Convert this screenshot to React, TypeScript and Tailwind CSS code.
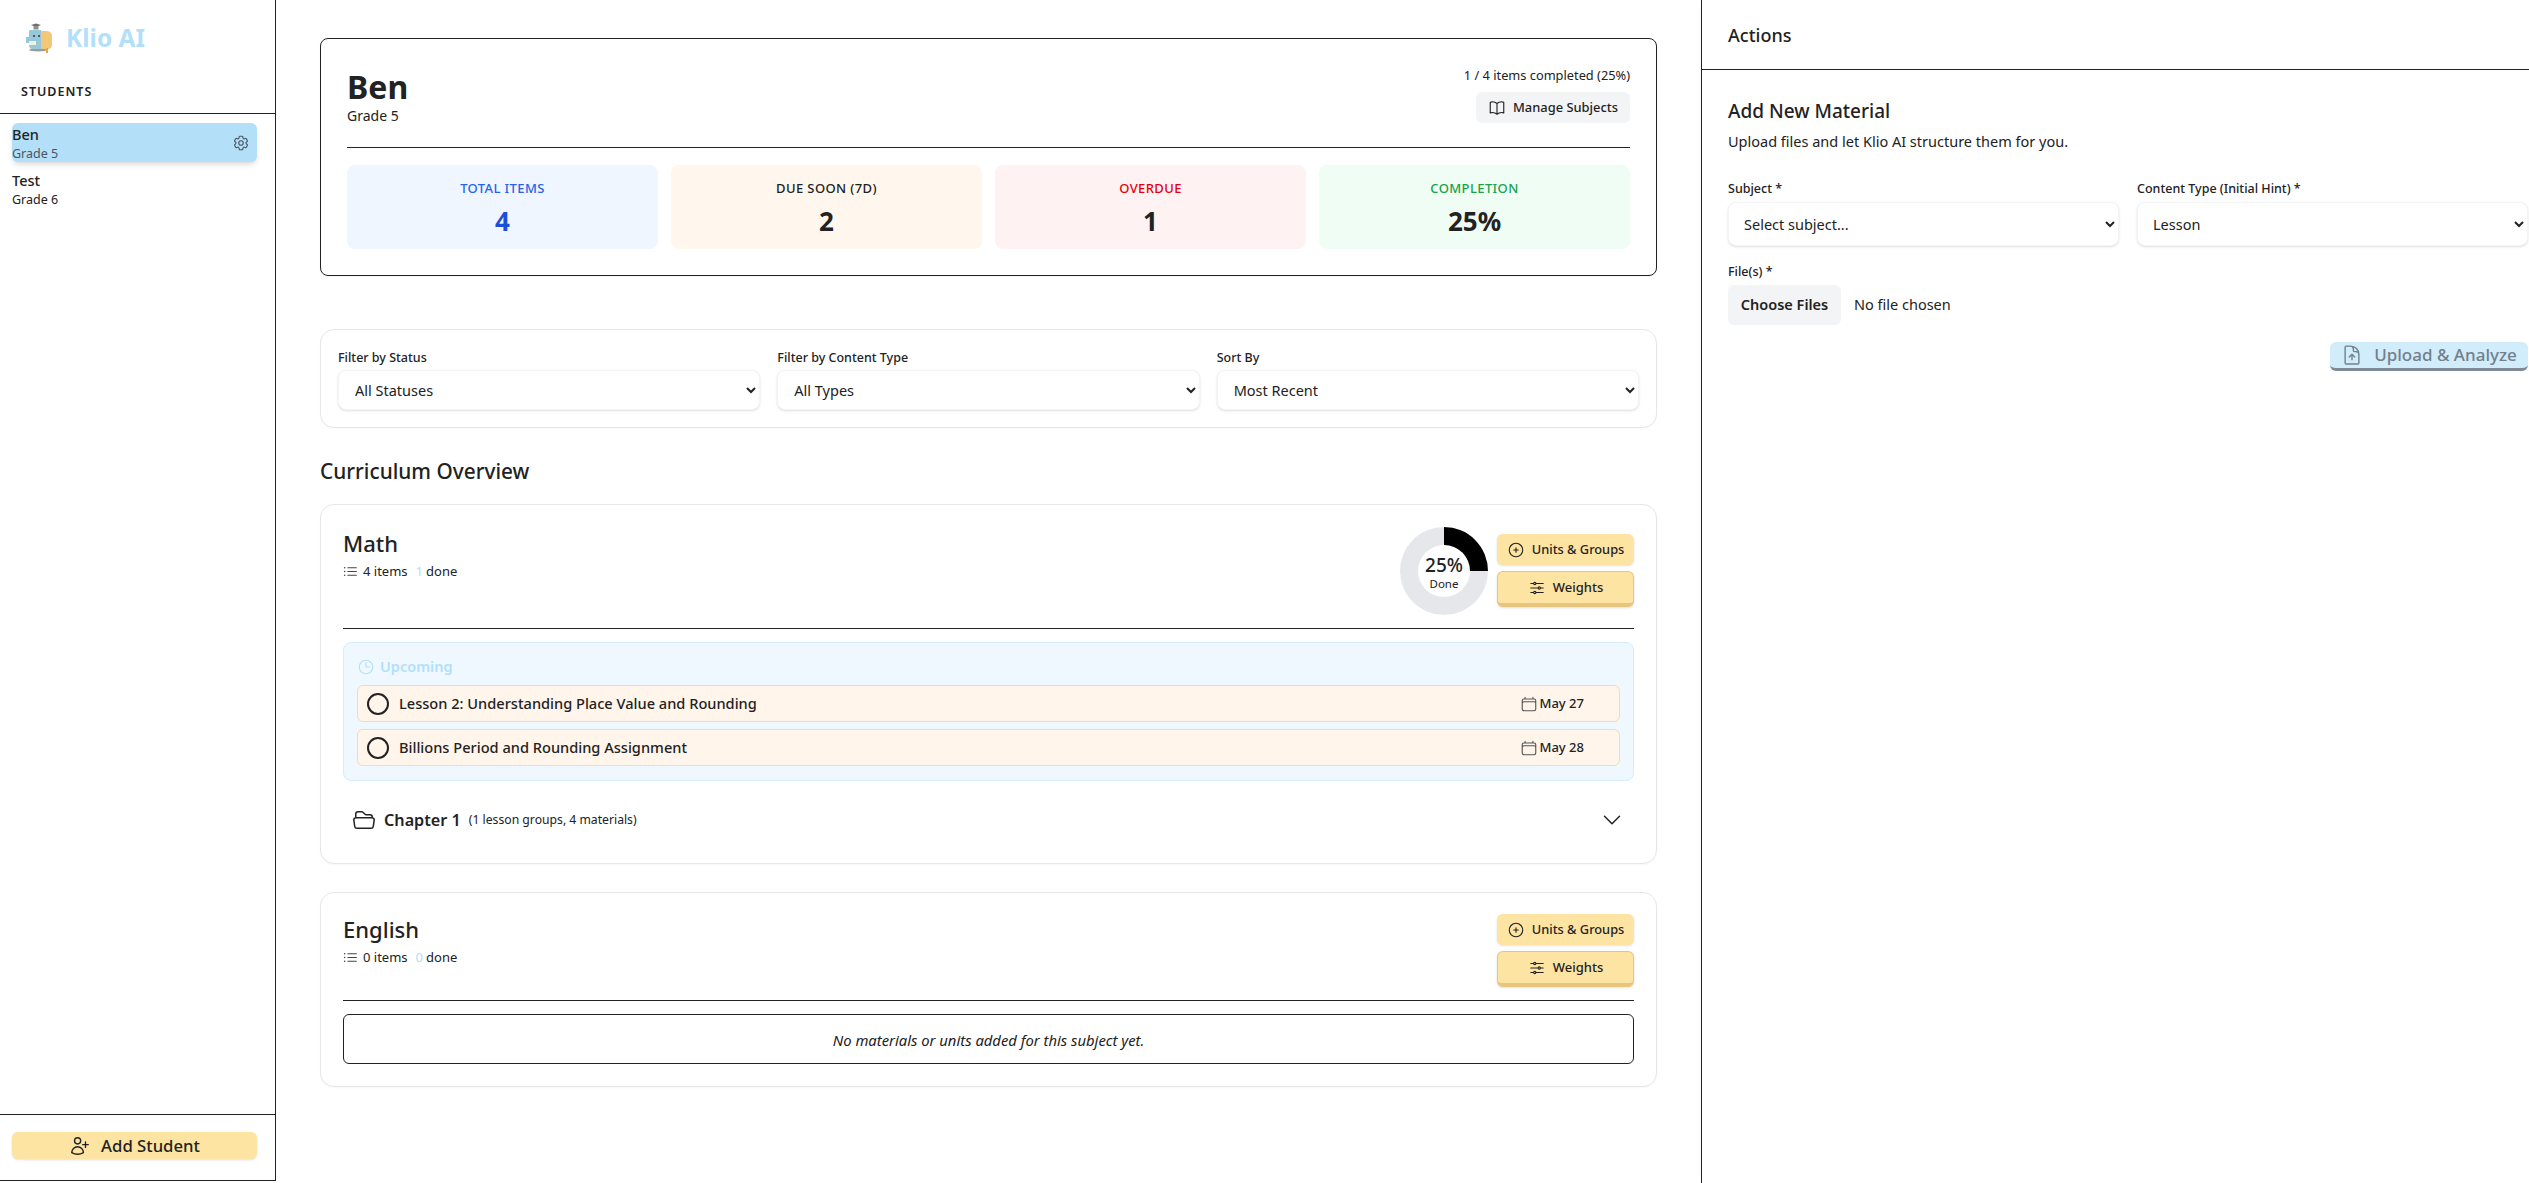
import {
  HiOutlineAdjustmentsHorizontal,
  HiOutlineBookOpen,
  HiOutlineCalendar,
  HiOutlineChevronDown,
  HiOutlineClock,
  HiOutlineCog6Tooth,
  HiOutlineDocumentArrowUp,
  HiOutlineFolderOpen,
  HiOutlineListBullet,
  HiOutlinePlusCircle,
  HiOutlineUserPlus,
} from "react-icons/hi2";
import { Circle } from "lucide-react";

const stats = [
  { label: "TOTAL ITEMS", value: "4", box: "bg-[#eff6ff]", labelCls: "text-[#2563eb]", valueCls: "text-[#1d4ed8]" },
  { label: "DUE SOON (7D)", value: "2", box: "bg-[#fff7ed]", labelCls: "text-[#222]", valueCls: "text-[#222]" },
  { label: "OVERDUE", value: "1", box: "bg-[#fef2f2]", labelCls: "text-[#e7000b]", valueCls: "text-[#222]" },
  { label: "COMPLETION", value: "25%", box: "bg-[#f0fdf4]", labelCls: "text-[#16a34a]", valueCls: "text-[#222]" },
];

function Logo() {
  return (
    <svg viewBox="0 0 28 32" className="h-8 w-7 shrink-0">
      <ellipse cx="13" cy="28" rx="9" ry="1.5" fill="#9a9a9a" />
      <path d="M13 9h8c4 0 6 2 6 6v7c0 3-1 5-4 5H13z" fill="#f2c878" />
      <path d="M5 8h11v19H7c-2 0-3-2-3-4v-2H1v-6h3v-4c0-2 0-3 1-3z" fill="#96c8da" />
      <path d="M6 3l5-1.5L16 3l-5 2z" fill="#6f6f6f" />
      <rect x="8.5" y="4" width="5" height="3.5" fill="#8f8f8f" />
      <circle cx="9" cy="14" r="1" fill="#333" />
      <circle cx="14" cy="14" r="1" fill="#333" />
      <rect x="4" y="19" width="7" height="4" fill="#eef1dd" />
      <rect x="21" y="26" width="2" height="5" fill="#e2a850" />
    </svg>
  );
}

function Sidebar() {
  return (
    <aside className="flex h-[1181px] w-[276px] shrink-0 flex-col border-r border-b border-[#222] bg-white shadow-[2px_0_8px_rgba(0,0,0,0.02)]">
      <div className="h-[114px] shrink-0 border-b border-[#222]">
        <div className="flex items-center gap-[13px] pt-[22px] pl-[25px]">
          <Logo />
          <span className="text-[24.5px] leading-8 font-bold text-[#b3e0f9]">Klio AI</span>
        </div>
        <div className="mt-[28px] pl-[21px] text-[12.5px] leading-5 font-semibold tracking-[0.08em] text-[#222]">STUDENTS</div>
      </div>
      <div className="flex-1 pt-[9px] pr-[18px] pl-3">
        <div className="flex h-[39px] items-center justify-between rounded-md bg-[#b3dff8] pr-[7px] shadow-md">
          <div className="pt-[2px]">
            <div className="text-[14.5px] leading-[20px] font-medium text-[#222]">Ben</div>
            <div className="text-[12.5px] leading-[19px] text-[#4b5563]">Grade 5</div>
          </div>
          <HiOutlineCog6Tooth className="h-[18px] w-[18px] text-[#4b5563]" />
        </div>
        <div className="mt-[8px]">
          <div className="text-[14.5px] leading-[20px] font-medium text-[#222]">Test</div>
          <div className="text-[12.5px] leading-[19px] text-[#222]">Grade 6</div>
        </div>
      </div>
      <div className="h-[66px] shrink-0 border-t border-[#222] pt-[17px] pr-[18px] pl-3">
        <button className="flex h-[27px] w-full items-center justify-center gap-[10px] rounded-md bg-[#fde4a3] text-[16.7px] font-medium text-[#222] shadow-sm">
          <HiOutlineUserPlus className="h-[22px] w-[22px]" />
          Add Student
        </button>
      </div>
    </aside>
  );
}

function FilterSelect({ label, value }: { label: string; value: string }) {
  return (
    <div>
      <label className="block pt-[2px] text-[12.5px] leading-[18px] font-medium text-[#222]">{label}</label>
      <select className="mt-[3px] h-10 w-full rounded-lg border border-[#f3f4f6] bg-white pl-[12px] text-[14.5px] text-[#222] shadow-sm">
        <option>{value}</option>
      </select>
    </div>
  );
}

function SubjectButtons() {
  return (
    <div className="flex w-[137px] flex-col gap-[6px]">
      <button className="flex h-[31px] items-center justify-center gap-[7px] rounded-md bg-[#fde4a3] text-[12.8px] font-medium text-[#222] shadow-sm">
        <HiOutlinePlusCircle className="h-[18px] w-[18px]" />
        Units &amp; Groups
      </button>
      <button className="flex h-9 items-center justify-center gap-[7px] rounded-md border border-b-[4px] border-[#e8c57c] bg-[#fde4a3] text-[13px] font-medium text-[#222] shadow-sm">
        <HiOutlineAdjustmentsHorizontal className="h-[18px] w-[18px]" />
        Weights
      </button>
    </div>
  );
}

function Meta({ items, done }: { items: number; done: number }) {
  return (
    <div className="mt-[4px] flex items-center text-[13px] leading-[18px] text-[#222]">
      <HiOutlineListBullet className="-ml-[1px] h-[17px] w-[17px] text-[#444]" />
      <span className="ml-[4px]">{items} items</span>
      <span className="ml-[8px] text-[#b3e0f9]">{done}</span>
      <span className="ml-[3px]">done</span>
    </div>
  );
}

function Donut() {
  return (
    <div className="flex h-[88px] w-[88px] items-center justify-center rounded-full bg-[conic-gradient(#000_0_25%,#e5e7eb_25%_100%)]">
      <div className="flex h-[52px] w-[52px] flex-col items-center justify-center rounded-full bg-white">
        <span className="text-[19px] leading-[24px] font-medium text-[#222]">25%</span>
        <span className="text-[11.5px] leading-[13px] text-[#222]">Done</span>
      </div>
    </div>
  );
}

function UpcomingRow({ title, date }: { title: string; date: string }) {
  return (
    <div className="flex h-[37px] items-center rounded-md border border-[#fcd9a8] bg-[#fff5eb] pr-[35px] pl-[8px]">
      <Circle className="h-6 w-6 text-[#222]" strokeWidth={2} />
      <span className="ml-[9px] flex-1 text-[14.6px] font-medium text-[#222]">{title}</span>
      <HiOutlineCalendar className="h-[18px] w-[18px] text-[#555]" />
      <span className="ml-[2px] text-[13px] font-medium text-[#222]">{date}</span>
    </div>
  );
}

function MathCard() {
  return (
    <section className="h-[360px] rounded-[14px] border border-[#e5e7eb] bg-white px-[22px] pt-[22px] shadow-[0_1px_2px_rgba(0,0,0,0.03)]">
      <div className="flex h-[102px] justify-between border-b border-[#222]">
        <div className="pt-[1px]">
          <h3 className="text-[22px] leading-[30px] font-medium text-[#222]">Math</h3>
          <Meta items={4} done={1} />
        </div>
        <div className="flex items-start gap-[9px]">
          <Donut />
          <div className="pt-[7px]">
            <SubjectButtons />
          </div>
        </div>
      </div>
      <div className="mt-[13px] h-[139px] rounded-lg border border-[#d6ecfb] bg-[#eff8ff] px-[13px] pt-[14px]">
        <div className="flex h-[20px] items-center gap-[5px] text-[14.5px] font-semibold text-[#b3e0f9]">
          <HiOutlineClock className="h-[18px] w-[18px]" />
          Upcoming
        </div>
        <div className="mt-[8px] flex flex-col gap-[7px]">
          <UpcomingRow title="Lesson 2: Understanding Place Value and Rounding" date="May 27" />
          <UpcomingRow title="Billions Period and Rounding Assignment" date="May 28" />
        </div>
      </div>
      <div className="mt-[27px] flex items-center pr-[10px] pl-[9px]">
        <HiOutlineFolderOpen className="h-6 w-6 text-[#222]" />
        <span className="ml-[8px] text-[16.2px] leading-6 font-semibold text-[#222]">Chapter 1</span>
        <span className="ml-[8px] flex-1 text-[12.2px] text-[#222]">(1 lesson groups, 4 materials)</span>
        <HiOutlineChevronDown className="h-6 w-6 text-[#222]" />
      </div>
    </section>
  );
}

function EnglishCard() {
  return (
    <section className="mt-7 h-[195px] rounded-[14px] border border-[#e5e7eb] bg-white px-[22px] pt-[21px] shadow-[0_1px_2px_rgba(0,0,0,0.03)]">
      <div className="flex h-[87px] justify-between border-b border-[#222]">
        <div>
          <h3 className="text-[22px] leading-[30px] font-medium text-[#222]">English</h3>
          <Meta items={0} done={0} />
        </div>
        <SubjectButtons />
      </div>
      <div className="mt-[13px] flex h-[50px] items-center justify-center rounded-md border border-[#222] pt-[2px] text-[14.8px] text-[#222] italic">
        No materials or units added for this subject yet.
      </div>
    </section>
  );
}

function Overview() {
  return (
    <main className="h-[1183px] min-w-0 flex-1 overflow-hidden bg-white pt-[38px] pr-[44px] pl-[44px]">
      <section className="h-[238px] rounded-lg border border-[#222] bg-white px-[26px] pt-[27px] shadow-[0_1px_2px_rgba(0,0,0,0.05)]">
        <div className="flex h-[82px] justify-between border-b border-[#222]">
          <div>
            <h1 className="pt-[1px] text-[32px] leading-[39px] font-bold text-[#222]">Ben</h1>
            <p className="text-[14px] leading-5 text-[#222]">Grade 5</p>
          </div>
          <div className="flex flex-col items-end">
            <span className="text-[12.8px] leading-[18px] text-[#222]">1 / 4 items completed (25%)</span>
            <button className="mt-[8px] flex h-[31px] items-center gap-[7px] rounded-md bg-[#f3f4f6] pr-[12px] pl-[12px] text-[12.9px] font-medium text-[#222]">
              <HiOutlineBookOpen className="h-[18px] w-[18px]" />
              Manage Subjects
            </button>
          </div>
        </div>
        <div className="mt-[17px] grid grid-cols-4 gap-[13px]">
          {stats.map((s) => (
            <div key={s.label} className={`flex h-[84px] flex-col items-center rounded-lg pt-[13px] ${s.box}`}>
              <span className={`text-[13px] leading-5 font-medium tracking-[0.03em] ${s.labelCls}`}>{s.label}</span>
              <span className={`mt-[5px] text-[26px] leading-9 font-bold ${s.valueCls}`}>{s.value}</span>
            </div>
          ))}
        </div>
      </section>

      <section className="mt-[53px] h-[99px] rounded-[14px] border border-[#e5e7eb] bg-white p-[17px] shadow-[0_1px_2px_rgba(0,0,0,0.03)]">
        <div className="grid grid-cols-3 gap-[17px]">
          <FilterSelect label="Filter by Status" value="All Statuses" />
          <FilterSelect label="Filter by Content Type" value="All Types" />
          <FilterSelect label="Sort By" value="Most Recent" />
        </div>
      </section>

      <h2 className="mt-[28px] text-[20.8px] leading-[30px] font-medium text-[#222]">Curriculum Overview</h2>
      <div className="mt-[18px]">
        <MathCard />
        <EnglishCard />
      </div>
    </main>
  );
}

function ActionSelect({ label, value }: { label: string; value: string }) {
  return (
    <div>
      <label className="block text-[12.5px] leading-5 font-medium text-[#222]">{label}</label>
      <select className="mt-[3px] h-11 w-full rounded-lg border border-[#f3f4f6] bg-white pl-[11px] text-[14.5px] text-[#222] shadow-sm">
        <option>{value}</option>
      </select>
    </div>
  );
}

function Actions() {
  return (
    <aside className="h-[1183px] w-[828px] shrink-0 border-l border-[#222] bg-white shadow-[-2px_0_8px_rgba(0,0,0,0.02)]">
      <div className="flex h-[70px] items-center border-b border-[#222] pt-[2px] pl-[26px] text-[18px] font-medium text-[#222]">Actions</div>
      <div className="pt-[28px] pr-[1px] pl-[26px]">
        <h2 className="text-[19px] leading-[26px] font-medium text-[#222]">Add New Material</h2>
        <p className="mt-[7px] text-[14.5px] leading-5 text-[#222]">Upload files and let Klio AI structure them for you.</p>
        <div className="mt-[28px] grid grid-cols-2 gap-[18px]">
          <ActionSelect label="Subject *" value="Select subject..." />
          <ActionSelect label="Content Type (Initial Hint) *" value="Lesson" />
        </div>
        <label className="mt-[16px] block text-[12.5px] leading-5 font-medium text-[#222]">File(s) *</label>
        <div className="mt-[3px] flex items-center">
          <button className="h-10 w-[113px] rounded-md bg-[#f3f4f6] text-[14.5px] font-semibold text-[#222]">Choose Files</button>
          <span className="ml-[13px] text-[14.5px] text-[#222]">No file chosen</span>
        </div>
        <div className="mt-[17px] flex justify-end">
          <button className="flex h-[29px] w-[198px] items-center justify-center gap-[11px] rounded-md border-b-[3px] border-[#7e8b94] bg-[#d1ecfb] text-[17px] font-medium text-[#71808b]">
            <HiOutlineDocumentArrowUp className="h-[22px] w-[22px]" />
            Upload &amp; Analyze
          </button>
        </div>
      </div>
    </aside>
  );
}

export default function App() {
  return (
    <div className="flex h-[1183px] w-[2529px] overflow-hidden bg-white font-['Noto_Sans',sans-serif]">
      <Sidebar />
      <Overview />
      <Actions />
    </div>
  );
}
